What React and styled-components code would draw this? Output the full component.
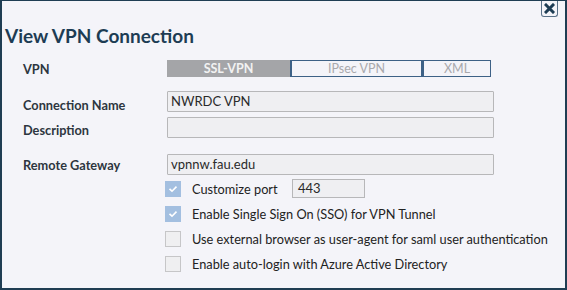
import React from "react";
import styled, { createGlobalStyle } from "styled-components";

const Global = createGlobalStyle`
    html, body { margin: 0; padding: 0; }
    body {
        font-family: Lato, "Open Sans", "Liberation Sans", sans-serif;
        background: #f4f4f9;
    }
    * { box-sizing: border-box; }
`;

export default function App() {
    const tabs = [
        { name: "SSL-VPN", width: 123, active: true },
        { name: "IPsec VPN", width: 132 },
        { name: "XML", width: 69 },
    ];
    const options = [
        { text: "Customize port", checked: true, port: "443" },
        { text: "Enable Single Sign On (SSO) for VPN Tunnel", checked: true },
        { text: "Use external browser as user-agent for saml user authentication", checked: false },
        { text: "Enable auto-login with Azure Active Directory", checked: false },
    ];

    return (
        <Dialog>
            <Global />
            <TopBar>
                <CloseButton aria-label="close">
                    <svg width="11" height="11" viewBox="0 0 11 11">
                        <path d="M2 2 L9 9 M9 2 L2 9" stroke="#1d3c54" strokeWidth="3" strokeLinecap="square" />
                    </svg>
                </CloseButton>
            </TopBar>
            <Title>View VPN Connection</Title>
            <Form>
                <Label>VPN</Label>
                <Tabs>
                    {tabs.map(t => (
                        <Tab key={t.name} $active={t.active} style={{ width: t.width }}>{t.name}</Tab>
                    ))}
                </Tabs>

                <Label $top={14} $shift={3}>Connection Name</Label>
                <Field $top={14}>NWRDC VPN</Field>

                <Label $top={5} $shift={2}>Description</Label>
                <Field $top={5}></Field>

                <Label $top={16}>Remote Gateway</Label>
                <Field $top={16}>vpnnw.fau.edu</Field>

                <Spacer />
                <Options>
                    {options.map(o => (
                        <OptionRow key={o.text}>
                            <Check $checked={o.checked}>
                                {o.checked && (
                                    <svg width="10" height="8" viewBox="0 0 10 8">
                                        <path d="M1.5 3.8 L4 6.2 L8.5 1.6" fill="none" stroke="#fff" strokeWidth="1.6" />
                                    </svg>
                                )}
                            </Check>
                            <OptionText $wide={!!o.port}>{o.text}</OptionText>
                            {o.port && <PortField>{o.port}</PortField>}
                        </OptionRow>
                    ))}
                </Options>
            </Form>
        </Dialog>
    );
}

const Dialog = styled.div`
    width: 567px;
    height: 290px;
    background: #f4f4f9;
    border: 2px solid #1f3d53;
    border-top-width: 1px;
    overflow: hidden;
`;

const TopBar = styled.div`
    display: flex;
    justify-content: flex-end;
    padding-right: 7px;
    height: 16px;
`;

const CloseButton = styled.div`
    width: 17px;
    height: 16px;
    border: 1px solid #5a7188;
    border-top: none;
    border-radius: 0 0 3px 3px;
    display: flex;
    align-items: center;
    justify-content: center;
    padding-bottom: 1px;
`;

const Title = styled.h1`
    margin: 7px 0 0 3px;
    font-size: 19px;
    line-height: 24px;
    font-weight: 700;
    color: #1d3c54;
`;

const Form = styled.div`
    display: grid;
    grid-template-columns: 144px 327px;
    align-items: center;
    padding-left: 21px;
    margin-top: 12px;
`;

const Label = styled.div`
    font-size: 12.75px;
    font-weight: 700;
    color: #2d3640;
    margin-top: ${props => props.$top || 0}px;
    position: relative;
    top: ${props => props.$shift || 0}px;
`;

const Tabs = styled.div`
    display: flex;
    height: 17px;
`;

const Tab = styled.div`
    display: flex;
    align-items: center;
    justify-content: center;
    font-size: 12.5px;
    font-weight: ${props => props.$active ? 700 : 400};
    color: ${props => props.$active ? "#f2f2f2" : "#a9a9ad"};
    background: ${props => props.$active ? "#a4a5a8" : "transparent"};
    border: 1px solid ${props => props.$active ? "#a4a5a8" : "#3d6186"};
    & + & { border-left: 2px solid #3d6186; }
`;

const Field = styled.div`
    height: 21px;
    margin-top: ${props => props.$top || 0}px;
    background: #efeff2;
    border: 1px solid #b7b7b9;
    border-radius: 1px;
    padding: 0 3px;
    font-size: 13px;
    line-height: 19px;
    color: #2a2a2a;
`;

const Spacer = styled.div``;

const Options = styled.div`
    margin-left: -2px;
    margin-top: 1px;
    width: 400px;
`;

const OptionRow = styled.div`
    display: flex;
    align-items: center;
    height: 25px;
`;

const Check = styled.div`
    width: 16px;
    height: 16px;
    flex: none;
    display: flex;
    align-items: center;
    justify-content: center;
    background: ${props => props.$checked ? "#a3bfe0" : "#efeff1"};
    border: 1px solid ${props => props.$checked ? "#a3bfe0" : "#c6c6c8"};
`;

const OptionText = styled.div`
    margin-left: 11px;
    font-size: 12.75px;
    color: #222;
    white-space: nowrap;
    min-width: ${props => props.$wide ? "100px" : "0"};
`;

const PortField = styled.div`
    width: 73px;
    height: 19px;
    background: #efeff2;
    border: 1px solid #b7b7b9;
    padding: 0 5px;
    font-size: 13px;
    line-height: 17px;
    color: #2a2a2a;
`;
